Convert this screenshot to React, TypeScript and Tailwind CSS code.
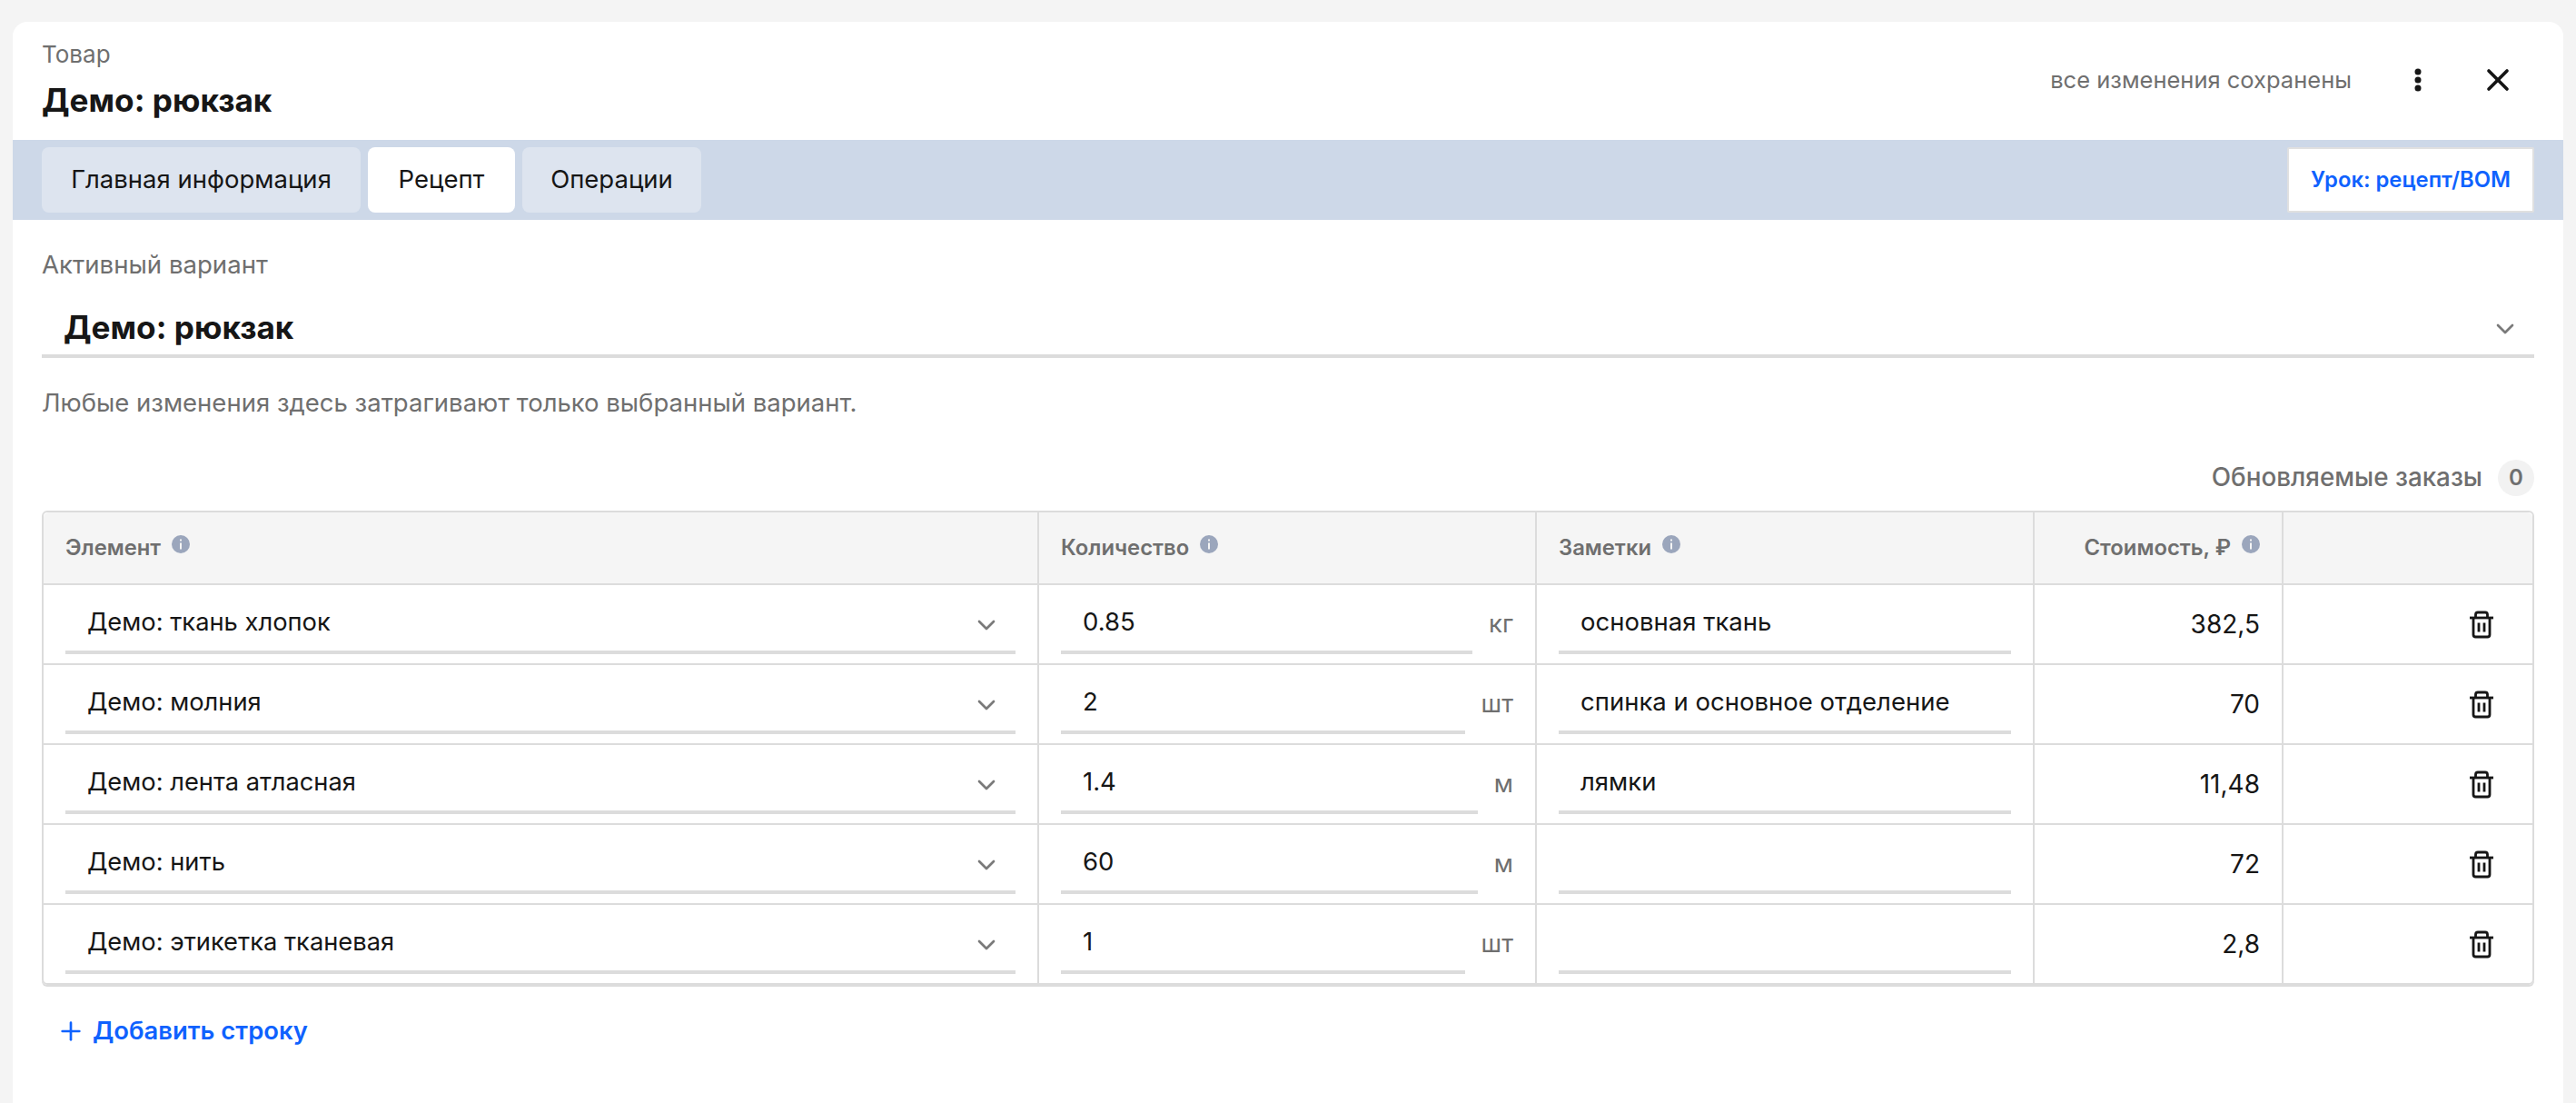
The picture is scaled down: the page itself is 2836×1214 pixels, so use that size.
import { ChevronDown, Plus, X } from "lucide-react";

const rows = [
  { item: "Демо: ткань хлопок", qty: "0.85", unit: "кг", note: "основная ткань", cost: "382,5" },
  { item: "Демо: молния", qty: "2", unit: "шт", note: "спинка и основное отделение", cost: "70" },
  { item: "Демо: лента атласная", qty: "1.4", unit: "м", note: "лямки", cost: "11,48" },
  { item: "Демо: нить", qty: "60", unit: "м", note: "", cost: "72" },
  { item: "Демо: этикетка тканевая", qty: "1", unit: "шт", note: "", cost: "2,8" },
];

const GRID = "grid grid-cols-[1096px_548px_548px_274px_274px]";

const InfoIcon = () => (
  <svg width="20" height="20" viewBox="0 0 20 20" className="shrink-0">
    <circle cx="10" cy="10" r="10" fill="#9ba6bc" />
    <rect x="9" y="8.5" width="2" height="7" fill="#f5f5f5" />
    <rect x="9" y="4.5" width="2" height="2" fill="#f5f5f5" />
  </svg>
);

const TrashIcon = () => (
  <svg
    className="mt-[2px]"
    width="32"
    height="32"
    viewBox="0 0 32 32"
    fill="none"
    stroke="#161616"
    strokeWidth="2.8"
  >
    <path d="M3 8h26" />
    <path d="M9.5 8V4.5a2.5 2.5 0 0 1 2.5-2.5h8a2.5 2.5 0 0 1 2.5 2.5V8" />
    <path d="M7 8v18.5a2.5 2.5 0 0 0 2.5 2.5h13a2.5 2.5 0 0 0 2.5-2.5V8" />
    <path d="M13 13.5v10M19 13.5v10" />
  </svg>
);

const KebabIcon = () => (
  <svg width="8" height="26" viewBox="0 0 8 26" fill="#161616">
    <circle cx="4" cy="4" r="3.5" />
    <circle cx="4" cy="13" r="3.5" />
    <circle cx="4" cy="22" r="3.5" />
  </svg>
);

const HeaderCell = ({ label, right, last }: { label?: string; right?: boolean; last?: boolean }) => (
  <div
    className={`flex h-[78px] items-center gap-3 px-6 ${right ? "justify-end" : ""} ${
      last ? "" : "border-r-2 border-[#dcdcdc]"
    }`}
  >
    {label && (
      <>
        <span className="text-[23.8px] font-semibold text-[#6f6f6f]">{label}</span>
        <span className="-mt-[8px]">
          <InfoIcon />
        </span>
      </>
    )}
  </div>
);

export default function App() {
  return (
    <div className="min-h-[1214px] bg-[#f4f4f4] px-[14px] pt-[24px] font-['Inter',sans-serif] text-[#161616]">
      <div className="flex h-[1190px] flex-col rounded-t-[16px] bg-white">
        <div className="flex h-[130px] items-start justify-between pl-8 pr-[52px]">
          <div>
            <div className="mt-[20px] text-[26px] leading-[32px] text-[#6f6f6f]">Товар</div>
            <div className="mt-[12px] text-[35.2px] font-bold leading-[44px]">Демо: рюкзак</div>
          </div>
          <div className="mt-[44px] flex h-[40px] items-center">
            <span className="text-[25.5px] leading-[36px] text-[#6f6f6f]">все изменения сохранены</span>
            <span className="ml-[69px] flex">
              <KebabIcon />
            </span>
            <X className="ml-[64px]" size={40} strokeWidth={2.2} color="#161616" />
          </div>
        </div>

        <div className="flex h-[88px] items-center justify-between bg-[#cdd8e8] pl-8 pr-[32px]">
          <div className="flex gap-2">
            <button className="h-[72px] w-[351px] rounded-lg bg-[#dde4ef] text-[27.5px]">Главная информация</button>
            <button className="h-[72px] w-[162px] rounded-lg bg-white text-[27.5px]">Рецепт</button>
            <button className="h-[72px] w-[197px] rounded-lg bg-[#dde4ef] text-[27.5px]">Операции</button>
          </div>
          <button className="h-[72px] w-[272px] rounded-[2px] border-2 border-[#e0e0e0] bg-white text-[23.8px] font-semibold text-[#0f62fe]">
            Урок: рецепт/BOM
          </button>
        </div>

        <div className="flex flex-col px-8">
          <div className="mt-[31px] text-[27.6px] leading-[36px] text-[#6f6f6f]">Активный вариант</div>
          <div className="mt-[21px] flex h-[64px] items-center justify-between border-b-4 border-[#dcdcdc] pl-6 pr-[16px]">
            <span className="text-[35.2px] font-bold">Демо: рюкзак</span>
            <ChevronDown className="mt-[4px]" size={32} strokeWidth={2} color="#7a7a7a" />
          </div>
          <div className="mt-[31px] text-[27.5px] leading-[36px] text-[#6f6f6f]">
            Любые изменения здесь затрагивают только выбранный вариант.
          </div>

          <div className="mt-[45px] flex h-[40px] items-center justify-end gap-[17px]">
            <span className="text-[27.8px] font-medium text-[#6f6f6f]">Обновляемые заказы</span>
            <span className="flex h-[40px] w-[40px] items-center justify-center rounded-full bg-[#f2f2f2] text-[24px] font-semibold text-[#6f6f6f]">
              0
            </span>
          </div>

          <div className="mt-[16px] rounded-[6px] border-2 border-[#dcdcdc] shadow-[0_2px_0_#dcdcdc]">
            <div className={`${GRID} rounded-t-[6px] bg-[#f5f5f5]`}>
              <HeaderCell label="Элемент" />
              <HeaderCell label="Количество" />
              <HeaderCell label="Заметки" />
              <HeaderCell label="Стоимость, ₽" right />
              <HeaderCell last />
            </div>
            {rows.map((row) => (
              <div key={row.item} className={`${GRID} h-[88px] border-t-2 border-[#dcdcdc]`}>
                <div className="border-r-2 border-[#dcdcdc] px-6">
                  <div className="mt-[8px] flex h-[68px] items-center justify-between border-b-4 border-[#dcdcdc] pl-6 pr-[16px]">
                    <span className="mt-[2px] text-[27.3px]">{row.item}</span>
                    <ChevronDown className="mt-[8px]" size={32} strokeWidth={2} color="#7a7a7a" />
                  </div>
                </div>
                <div className="flex items-start gap-[18px] border-r-2 border-[#dcdcdc] pl-6 pr-6">
                  <div className="mt-[8px] flex h-[68px] min-w-0 flex-1 items-center border-b-4 border-[#dcdcdc] pl-6">
                    <span className="mt-[2px] text-[27.5px]">{row.qty}</span>
                  </div>
                  <span className="mt-[24px] text-[27.5px] leading-[36px] text-[#6f6f6f]">{row.unit}</span>
                </div>
                <div className="border-r-2 border-[#dcdcdc] px-6">
                  <div className="mt-[8px] flex h-[68px] items-center border-b-4 border-[#dcdcdc] pl-6">
                    <span className="mt-[2px] text-[27.5px]">{row.note}</span>
                  </div>
                </div>
                <div className="flex items-center justify-end border-r-2 border-[#dcdcdc] px-6 text-[28px]">
                  {row.cost}
                </div>
                <div className="flex items-center justify-end pr-[40px]">
                  <TrashIcon />
                </div>
              </div>
            ))}
          </div>

          <div className="mt-[30px] flex items-center gap-[8px] pl-[16px] text-[#0f62fe]">
            <Plus size={32} strokeWidth={2} />
            <span className="text-[27.4px] font-semibold">Добавить строку</span>
          </div>
        </div>
      </div>
    </div>
  );
}
